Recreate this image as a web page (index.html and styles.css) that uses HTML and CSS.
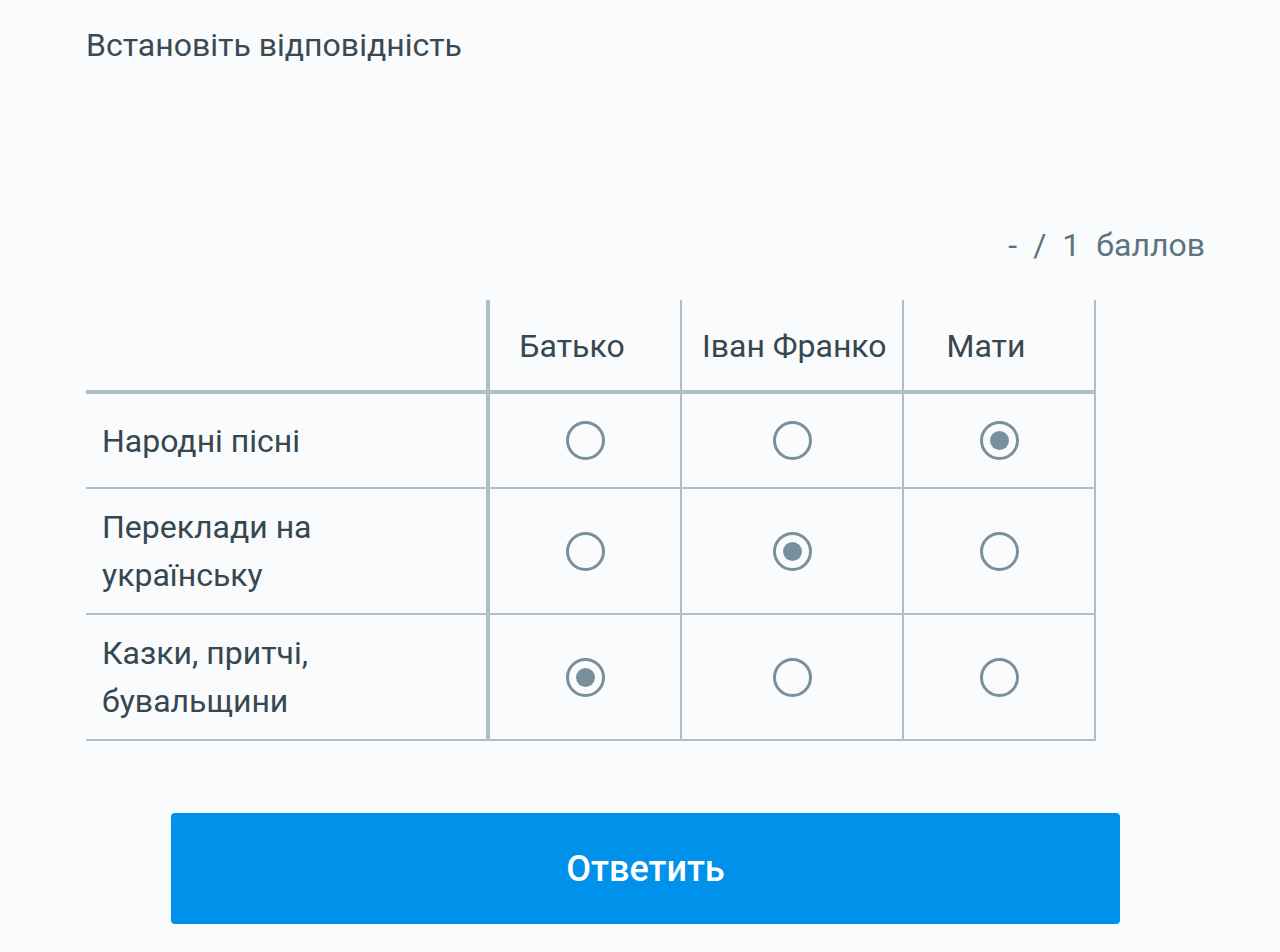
FILE: index.html
```html
<!DOCTYPE html>
<html lang="uk">
<head>
<meta charset="utf-8">
<title>Встановіть відповідність</title>
<link rel="stylesheet" href="styles.css">
</head>
<body>
<main class="page">
  <h1 class="question">Встановіть відповідність</h1>
  <div class="score"><span>-</span><span>/</span><span>1</span><span>баллов</span></div>
  <table class="matrix">
    <colgroup>
      <col class="col-label">
      <col class="col-a">
      <col class="col-b">
      <col class="col-c">
    </colgroup>
    <thead>
      <tr>
        <th class="corner"></th>
        <th>Батько</th>
        <th>Іван Франко</th>
        <th>Мати</th>
      </tr>
    </thead>
    <tbody>
      <tr>
        <td class="label">Народні пісні</td>
        <td class="cell"><span class="radio"></span></td>
        <td class="cell"><span class="radio"></span></td>
        <td class="cell"><span class="radio checked"></span></td>
      </tr>
      <tr>
        <td class="label">Переклади на українську</td>
        <td class="cell"><span class="radio"></span></td>
        <td class="cell"><span class="radio checked"></span></td>
        <td class="cell"><span class="radio"></span></td>
      </tr>
      <tr>
        <td class="label">Казки, притчі, бувальщини</td>
        <td class="cell"><span class="radio checked"></span></td>
        <td class="cell"><span class="radio"></span></td>
        <td class="cell"><span class="radio"></span></td>
      </tr>
    </tbody>
  </table>
  <div class="actions">
    <button class="submit" type="button">Ответить</button>
  </div>
</main>
</body>
</html>
```

FILE: styles.css
```css
html, body {
  margin: 0;
  padding: 0;
  background: #f9fbfc;
}

body {
  font-family: Roboto, "Noto Sans", sans-serif;
  color: #37474f;
}

.page {
  width: 1119px;
  padding: 23px 0 0 86px;
}

.question {
  margin: 0;
  font-size: 32px;
  font-weight: 400;
  line-height: 44px;
  color: #3b4a52;
}

.score {
  margin-top: 156px;
  display: flex;
  justify-content: flex-end;
  gap: 16px;
  font-size: 32px;
  line-height: 44px;
  color: #5d7480;
}

.matrix {
  margin-top: 33px;
  width: 1009px;
  border-collapse: collapse;
  table-layout: fixed;
  font-size: 32px;
  color: #37474f;
}

.col-label { width: 402px; }
.col-a { width: 193px; }
.col-b { width: 222px; }
.col-c { width: 192px; }

.matrix th {
  height: 88px;
  padding: 2px 46px 0 20px;
  font-weight: 400;
  text-align: center;
  white-space: nowrap;
  border-left: 2px solid #b0bec5;
  border-right: 2px solid #b0bec5;
  border-bottom: 4px solid #b0bec5;
  line-height: 48px;
}

.matrix th.corner {
  border-left: none;
  border-right: 4px solid #b0bec5;
}

.matrix td {
  border: 2px solid #b0bec5;
  line-height: 48px;
}

.matrix td.label {
  border-left: none;
  border-right: 4px solid #b0bec5;
  padding: 14px 60px 14px 16px;
  text-align: left;
}

.matrix td.cell {
  padding: 27px 0;
  text-align: center;
  vertical-align: middle;
  line-height: 0;
}

.radio {
  display: inline-block;
  box-sizing: border-box;
  width: 39px;
  height: 39px;
  border: 3px solid #78909c;
  border-radius: 50%;
  vertical-align: middle;
  position: relative;
}

.radio.checked::after {
  content: "";
  position: absolute;
  left: 7px;
  top: 7px;
  width: 19px;
  height: 19px;
  border-radius: 50%;
  background: #78909c;
}

.actions {
  margin-top: 72px;
  display: flex;
  justify-content: center;
}

.submit {
  width: 949px;
  height: 111px;
  border: none;
  border-radius: 4px;
  background: #0091ea;
  color: #ffffff;
  font-family: Roboto, "Noto Sans", sans-serif;
  font-size: 36px;
  font-weight: 500;
  cursor: pointer;
}
```
